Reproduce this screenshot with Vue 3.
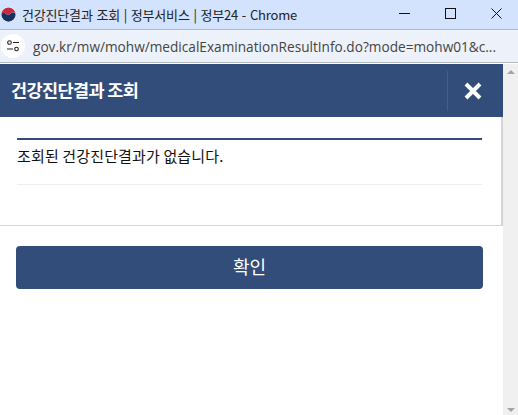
<script setup>
const pageTitle = '건강진단결과 조회 | 정부서비스 | 정부24 - Chrome'
const url = 'gov.kr/mw/mohw/medicalExaminationResultInfo.do?mode=mohw01&c...'
</script>

<template>
  <div class="window">
    <div class="titlebar">
      <svg class="favicon" width="15" height="15" viewBox="0 0 16 16">
        <circle cx="8" cy="8" r="8" fill="#fff" />
        <path d="M0.4 8A7.6 7.6 0 0 1 15.6 8C15.4 5.6 12.6 4.6 10.8 6.2 10 8 8 8.8 6.4 8.2 5 7.6 4.4 6.4 3 6.2 1.6 6 0.6 6.8 0.4 8Z" fill="#c9283e" />
        <path d="M0.4 8A7.6 7.6 0 0 0 15.6 8L15.2 6.8C14 5.4 11.8 5.4 10.8 6.2 10 8 8 8.8 6.4 8.2 5 7.6 4.4 6.4 3 6.2 1.6 6 0.6 6.8 0.4 8Z" fill="#16305f" />
      </svg>
      <span class="page-title">{{ pageTitle }}</span>
      <div class="win-controls">
        <svg width="11" height="11" viewBox="0 0 11 11"><path d="M0 5.5H11" stroke="#111" stroke-width="1" /></svg>
        <svg width="11" height="11" viewBox="0 0 11 11"><rect x="0.5" y="0.5" width="10" height="10" fill="none" stroke="#111" stroke-width="1" /></svg>
        <svg width="11" height="11" viewBox="0 0 11 11"><path d="M0.5 0.5 10.5 10.5M10.5 0.5 0.5 10.5" stroke="#111" stroke-width="1" /></svg>
      </div>
    </div>

    <div class="addressbar">
      <div class="site-icon">
        <svg width="14" height="12" viewBox="0 0 14 12">
          <circle cx="3.5" cy="2.5" r="1.8" fill="none" stroke="#222" stroke-width="1.1" />
          <path d="M7 2.5H13M1 9H7" stroke="#222" stroke-width="1.2" />
          <circle cx="10.5" cy="9" r="1.8" fill="none" stroke="#222" stroke-width="1.1" />
        </svg>
      </div>
      <span class="url">{{ url }}</span>
    </div>

    <div class="viewport">
      <main class="page">
        <header class="header">
          <h1 class="header-title">건강진단결과 조회</h1>
          <button type="button" class="close-btn" aria-label="닫기">
            <svg width="18" height="18" viewBox="0 0 18 18">
              <path d="M2 2 16 16M16 2 2 16" stroke="#fff" stroke-width="4" />
            </svg>
          </button>
        </header>

        <section class="panel">
          <p class="result">조회된 건강진단결과가 없습니다.</p>
        </section>

        <div class="actions">
          <button type="button" class="confirm-btn">확인</button>
        </div>
      </main>

      <div class="scrollbar">
        <span class="arrow up"></span>
        <span class="arrow down"></span>
      </div>
    </div>
  </div>
</template>

<style>
html, body {
  margin: 0;
  height: 100%;
  overflow: hidden;
  background: #fff;
}
</style>

<style scoped>
.window {
  width: 518px;
  height: 415px;
  display: flex;
  flex-direction: column;
  font-family: "Noto Sans CJK KR", "Liberation Sans", sans-serif;
}

.titlebar {
  height: 29px;
  flex: none;
  display: flex;
  align-items: center;
  padding-left: 1px;
  background: #d3e3fd;
  border-bottom: 1px solid #b4b8c0;
}

.favicon {
  flex: none;
}

.page-title {
  margin: -1px 0 0 6px;
  font-size: 13px;
  word-spacing: 1px;
  letter-spacing: -0.18px;
  color: #222;
  white-space: nowrap;
}

.win-controls {
  margin-left: auto;
  display: flex;
  gap: 35px;
  padding-right: 16px;
}

.win-controls svg {
  display: block;
  margin-top: -2px;
}

.addressbar {
  height: 32px;
  flex: none;
  display: flex;
  align-items: center;
  padding-left: 1px;
  background: #edf2fa;
  border-bottom: 1px solid #b4b8c0;
}

.site-icon {
  width: 24px;
  height: 24px;
  flex: none;
  display: flex;
  align-items: center;
  justify-content: center;
  border-radius: 50%;
  background: #fff;
}

.url {
  margin-left: 8px;
  font-family: "Open Sans", "Liberation Sans", sans-serif;
  font-size: 13.65px;
  color: #444;
  white-space: nowrap;
}

.viewport {
  flex: 1;
  min-height: 0;
  display: flex;
  padding-top: 1px;
}

.page {
  flex: 1;
  min-width: 0;
}

.header {
  height: 53px;
  display: flex;
  align-items: center;
  justify-content: space-between;
  background: #334d7a;
}

.header-title {
  margin: -2px 0 0 11px;
  font-size: 17.5px;
  font-weight: 700;
  letter-spacing: -0.6px;
  color: #fff;
}

.close-btn {
  width: 56px;
  height: 40px;
  display: flex;
  align-items: center;
  justify-content: center;
  padding: 0 5px 0 0;
  border: none;
  border-left: 1px solid #465d87;
  background: transparent;
}

.panel {
  height: 87px;
  padding: 21px 19px 0 17px;
  border-right: 2px solid #d5d5d5;
  border-bottom: 1px solid #d5d5d5;
}

.result {
  margin: 0;
  height: 47px;
  box-sizing: border-box;
  border-top: 2px solid #334d7a;
  border-bottom: 1px solid #eee;
  font-size: 15px;
  letter-spacing: 0.14px;
  line-height: 32px;
  color: #111;
}

.actions {
  padding: 20px 20px 0 16px;
}

.confirm-btn {
  width: 100%;
  height: 43px;
  display: block;
  padding: 0 0 3px;
  border: none;
  border-radius: 4px;
  background: #334d7a;
  font-family: inherit;
  font-size: 18px;
  color: #fff;
}

.scrollbar {
  position: relative;
  width: 15px;
  flex: none;
  background: #f0f0f0;
}

.arrow {
  position: absolute;
  left: 4px;
  width: 0;
  height: 0;
  border-left: 4px solid transparent;
  border-right: 4px solid transparent;
}

.arrow.up {
  top: 6px;
  border-bottom: 4px solid #a3a3a3;
}

.arrow.down {
  bottom: 3px;
  border-top: 4px solid #a3a3a3;
}
</style>
